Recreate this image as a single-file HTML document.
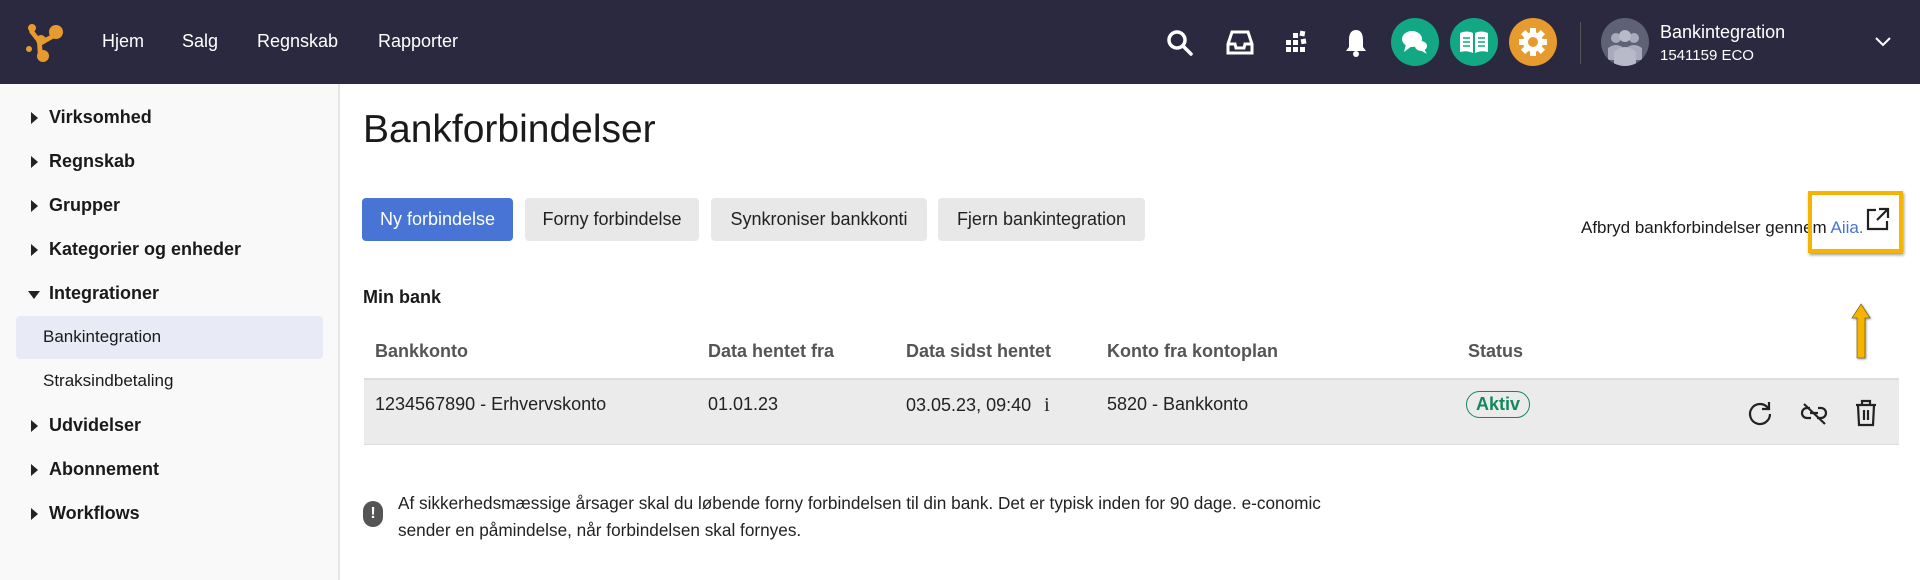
<!DOCTYPE html>
<html><head><meta charset="utf-8"><style>
*{box-sizing:border-box;margin:0;padding:0}
body{width:1920px;height:580px;overflow:hidden;font-family:"Liberation Sans",sans-serif;background:#fff;color:#1a1a1a;position:relative}
.hdr{position:absolute;left:0;top:0;width:1920px;height:84px;background:#2a2940;color:#fff}
.hdr .nav{position:absolute;top:31px;font-size:18px}
.ic{position:absolute;top:18px;width:48px;height:48px;border-radius:50%;display:flex;align-items:center;justify-content:center}
.side{position:absolute;left:0;top:84px;width:340px;height:496px;background:#f9f9f9;border-right:2px solid #e6e6e6}
.si{position:absolute;left:49px;font-size:18px;font-weight:bold}
.si:before{content:"";position:absolute;left:-18px;top:5px;border-left:7px solid #222;border-top:6px solid transparent;border-bottom:6px solid transparent}
.si.open:before{left:-21px;top:8px;border-top:8px solid #222;border-left:6px solid transparent;border-right:6px solid transparent;border-bottom:0}
.sub{position:absolute;left:43px;font-size:17px}
.btn{position:absolute;top:198px;height:43px;border-radius:4px;background:#e8e8e8;font-size:18px;display:flex;align-items:center;justify-content:center;color:#222}
.th{position:absolute;top:341px;font-size:18px;font-weight:bold;color:#555}
.td{position:absolute;top:394px;font-size:18px;color:#222}
</style></head><body>
<div class="hdr">
<svg style="position:absolute;left:26px;top:24px" width="40" height="40" viewBox="0 0 40 40"><g fill="#e79b2e"><circle cx="6" cy="4" r="4"/><circle cx="30" cy="8" r="7"/><circle cx="15" cy="16" r="5"/><circle cx="3" cy="25" r="3"/><circle cx="17" cy="32" r="6"/><path d="M6 4 L15 16 L30 8 L32 12 L16 21 L17 32 L12 32 L11 18 L3 8Z"/></g></svg>
<div class="nav" style="left:102px">Hjem</div>
<div class="nav" style="left:182px">Salg</div>
<div class="nav" style="left:257px">Regnskab</div>
<div class="nav" style="left:378px">Rapporter</div>
<svg style="position:absolute;left:1166px;top:29px" width="28" height="28" viewBox="0 0 28 28" fill="none" stroke="#fff" stroke-width="3.5"><circle cx="11" cy="11" r="8"/><path d="M17 17 L25 25" stroke-linecap="round"/></svg>
<svg style="position:absolute;left:1226px;top:30px" width="28" height="26" viewBox="0 0 28 26" fill="none" stroke="#fff" stroke-width="3"><path d="M6 2 H22 L26 14 V23 H2 V14Z"/><path d="M2 14 H9 L10 18 H18 L19 14 H26"/></svg>
<svg style="position:absolute;left:1286px;top:29px" width="24" height="28" viewBox="0 0 24 28" fill="#fff"><rect x="0" y="11" width="5" height="5"/><rect x="0" y="18" width="5" height="5"/><rect x="7" y="18" width="5" height="5"/><rect x="14" y="18" width="5" height="5"/><rect x="7" y="11" width="5" height="5"/><rect x="7" y="4" width="5" height="5"/><rect x="14" y="2" width="5" height="5" transform="rotate(10 16 4)"/><rect x="15" y="10" width="5" height="5" transform="rotate(-10 17 12)"/></svg>
<svg style="position:absolute;left:1344px;top:28px" width="24" height="30" viewBox="0 0 24 30" fill="#fff"><path d="M12 2 C6 2 5 8 5 12 V19 L2 23 H22 L19 19 V12 C19 8 18 2 12 2Z"/><circle cx="12" cy="26" r="3"/></svg>
<div class="ic" style="left:1391px;background:#13a884"><svg width="28" height="28" viewBox="0 0 28 28" fill="#fff"><ellipse cx="11" cy="11" rx="10" ry="8"/><path d="M5 16 L3 24 L11 18Z"/><ellipse cx="20" cy="18" rx="6" ry="5"/><path d="M23 21 L26 26 L19 22Z"/></svg></div>
<div class="ic" style="left:1450px;background:#13a884"><svg width="30" height="24" viewBox="0 0 30 24" fill="#fff"><path d="M1 3 Q8 0 14 3 V23 Q8 20 1 22Z M16 3 Q22 0 29 3 V22 Q22 20 16 23Z"/><g stroke="#13a884" stroke-width="1.6"><path d="M4 8 H11 M4 12 H11 M4 16 H11 M19 8 H26 M19 12 H26 M19 16 H26"/></g></svg></div>
<div class="ic" style="left:1509px;background:#e79b2e"><svg width="30" height="30" viewBox="0 0 30 30"><g fill="#fff" transform="translate(15 15)"><circle r="10"/><rect x="-3" y="-14" width="6" height="28"/><rect x="-3" y="-14" width="6" height="28" transform="rotate(45)"/><rect x="-3" y="-14" width="6" height="28" transform="rotate(90)"/><rect x="-3" y="-14" width="6" height="28" transform="rotate(135)"/></g><circle cx="15" cy="15" r="5" fill="#e79b2e"/></svg></div>
<div style="position:absolute;left:1580px;top:22px;width:1px;height:42px;background:#555"></div>
<div class="ic" style="left:1601px;background:#5f6175;overflow:hidden"><svg width="48" height="48" viewBox="0 0 48 48" fill="#a9abbc"><circle cx="15" cy="20" r="5"/><circle cx="33" cy="20" r="5"/><path d="M7 42 V30 Q15 24 23 30 V42Z M25 42 V30 Q33 24 41 30 V42Z"/><circle cx="24" cy="18" r="6" fill="#b8bac9"/><path d="M13 48 V34 Q24 24 35 34 V48Z" fill="#b8bac9"/></svg></div>
<div style="position:absolute;left:1660px;top:22px;font-size:18px">Bankintegration</div>
<div style="position:absolute;left:1660px;top:47px;font-size:15px">1541159 ECO</div>
<svg style="position:absolute;left:1874px;top:36px" width="18" height="12" viewBox="0 0 18 12" fill="none" stroke="#fff" stroke-width="2"><path d="M2 2 L9 9 L16 2"/></svg>
</div>
<div class="side">
<div class="si" style="top:23px">Virksomhed</div>
<div class="si" style="top:67px">Regnskab</div>
<div class="si" style="top:111px">Grupper</div>
<div class="si" style="top:155px">Kategorier og enheder</div>
<div class="si open" style="top:199px">Integrationer</div>
<div style="position:absolute;left:16px;top:232px;width:307px;height:43px;background:#e8ebf5;border-radius:4px"></div>
<div class="sub" style="top:243px">Bankintegration</div>
<div class="sub" style="top:287px">Straksindbetaling</div>
<div class="si" style="top:331px">Udvidelser</div>
<div class="si" style="top:375px">Abonnement</div>
<div class="si" style="top:419px">Workflows</div>
</div>
<div style="position:absolute;left:363px;top:108px;font-size:39px">Bankforbindelser</div>
<div class="btn" style="left:362px;width:151px;background:#4774d5;color:#fff">Ny forbindelse</div>
<div class="btn" style="left:525px;width:174px">Forny forbindelse</div>
<div class="btn" style="left:711px;width:216px">Synkroniser bankkonti</div>
<div class="btn" style="left:938px;width:207px">Fjern bankintegration</div>
<div style="position:absolute;left:1581px;top:218px;font-size:17px;white-space:nowrap">Afbryd bankforbindelser gennem <span style="color:#4774d5">Aiia.</span></div>
<svg style="position:absolute;left:1865px;top:206px" width="26" height="26" viewBox="0 0 26 26" fill="none" stroke="#222" stroke-width="2.2"><path d="M11 4 H3 V23 H22 V15"/><path d="M14 3 H23 V12 M23 3 L12 14"/></svg>
<div style="position:absolute;left:1808px;top:191px;width:95px;height:62px;border:4px solid #f5b400;box-shadow:1px 2px 3px rgba(0,0,0,.4)"></div>
<svg style="position:absolute;left:1848px;top:302px" width="26" height="60" viewBox="0 0 26 60"><path d="M13 2 L22 16 H17 L17 56 H9 L9 16 H4Z" fill="#f5b400" stroke="#5a4a00" stroke-width=".6" style="filter:drop-shadow(1px 1px 1px rgba(0,0,0,.4))"/></svg>
<div style="position:absolute;left:363px;top:287px;font-size:18px;font-weight:bold">Min bank</div>
<div class="th" style="left:375px">Bankkonto</div>
<div class="th" style="left:708px">Data hentet fra</div>
<div class="th" style="left:906px">Data sidst hentet</div>
<div class="th" style="left:1107px">Konto fra kontoplan</div>
<div class="th" style="left:1468px">Status</div>
<div style="position:absolute;left:364px;top:378px;width:1535px;height:67px;background:#ebebeb;border-top:2px solid #dcdcdc;border-bottom:1px solid #dcdcdc"></div>
<div class="td" style="left:375px">1234567890 - Erhvervskonto</div>
<div class="td" style="left:708px">01.01.23</div>
<div class="td" style="left:906px">03.05.23, 09:40 <span style="font-family:'Liberation Serif',serif;font-size:20px;margin-left:8px">i</span></div>
<div class="td" style="left:1107px">5820 - Bankkonto</div>
<div style="position:absolute;left:1466px;top:391px;width:64px;height:27px;border:1.5px solid #13885e;border-radius:14px;color:#13885e;font-weight:bold;font-size:18px;text-align:center;line-height:24px">Aktiv</div>
<svg style="position:absolute;left:1746px;top:399px" width="28" height="28" viewBox="0 0 28 28" fill="none" stroke="#222" stroke-width="2.2"><path d="M22 9 A10 10 0 1 0 24 15"/><path d="M23 3 V10 H16"/></svg>
<svg style="position:absolute;left:1799px;top:401px" width="30" height="26" viewBox="0 0 30 26" fill="none" stroke="#222" stroke-width="2.2"><path d="M11 7 H8 A5 5 0 0 0 8 17 H12 M19 7 H22 A5 5 0 0 1 22 17 H18 M11 12 H19"/><path d="M5 3 L26 23"/></svg>
<svg style="position:absolute;left:1854px;top:398px" width="24" height="30" viewBox="0 0 24 30" fill="none" stroke="#222" stroke-width="2.2"><path d="M2 7 H22 M8 7 V3 H16 V7 M4 7 L5 27 H19 L20 7 M10 12 V22 M14 12 V22"/></svg>
<div style="position:absolute;left:363px;top:501px;width:20px;height:26px;border-radius:10px;background:#555;color:#fff;font-weight:bold;font-size:16px;text-align:center;line-height:26px">!</div>
<div style="position:absolute;left:398px;top:490px;width:1020px;font-size:17.2px;line-height:27px;color:#222">Af sikkerhedsmæssige årsager skal du løbende forny forbindelsen til din bank. Det er typisk inden for 90 dage. e-conomic<br>sender en påmindelse, når forbindelsen skal fornyes.</div>
</body></html>
